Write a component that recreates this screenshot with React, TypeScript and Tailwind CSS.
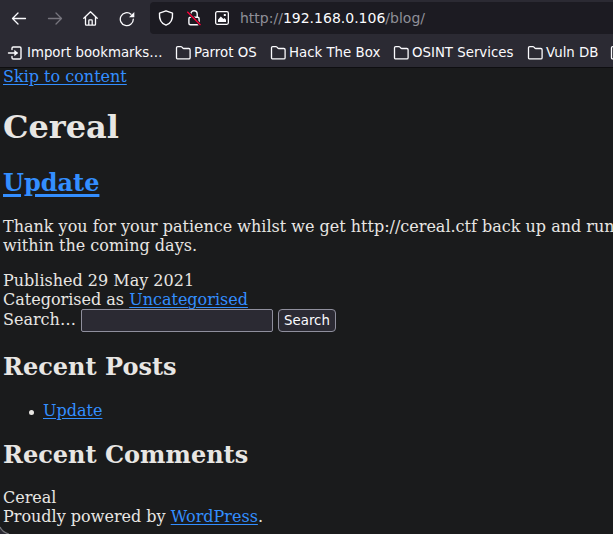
import React from "react";

const link = "text-[#338eff] underline decoration-1 underline-offset-2";
const headingLink = "text-[#338eff] underline decoration-[3px] underline-offset-3";

function Folder({ className = "" }: { className?: string }) {
  return (
    <svg className={`shrink-0 ${className}`} width="16" height="16" viewBox="0 0 16 16" fill="none" stroke="#fbfbfe" strokeWidth="1.3" strokeLinejoin="round">
      <path d="M2.700 1.600h3.200c.5 0 .8.2 1.100.5l.9 1c.2.3.5.4.9.4h5.100c.7 0 1.200.5 1.200 1.200v8c0 .7-.5 1.200-1.200 1.200H2.700c-.7 0-1.200-.5-1.200-1.200V2.800C1.500 2.100 2 1.600 2.700 1.600z" />
    </svg>
  );
}

function Bookmark({ label, className }: { label: string; className: string }) {
  return (
    <div className={`flex shrink-0 items-center gap-[3px] ${className}`}>
      <Folder />
      <span>{label}</span>
    </div>
  );
}

function Toolbar() {
  return (
    <div className="flex h-[34px] items-start">
      <div className="flex w-[150px] shrink-0 items-center gap-5 pt-[11px] pl-[11px]">
        <svg className="shrink-0" width="16" height="16" viewBox="0 0 16 16" fill="none" stroke="#fbfbfe" strokeWidth="1.3" strokeLinecap="round" strokeLinejoin="round">
          <path d="M14.500 7.500H1.500M7 2L1.500 7.500L7 13" />
        </svg>
        <svg className="shrink-0" width="16" height="16" viewBox="0 0 16 16" fill="none" stroke="#77757e" strokeWidth="1.3" strokeLinecap="round" strokeLinejoin="round">
          <path d="M1.500 7.500H14.500M9 2L14.500 7.500L9 13" />
        </svg>
        <svg className="shrink-0" width="16" height="16" viewBox="0 0 16 16" fill="none" stroke="#fbfbfe" strokeWidth="1.3" strokeLinecap="round" strokeLinejoin="round">
          <path d="M.8 7.200L7.500.7L14.200 7.200M2.500 6v7.300c0 .5.400.900.900.900h8.200c.5 0 .9-.4.9-.9V6M5.800 14V9.700c0-.5.300-.8.800-.8h1.800c.5 0 .8.300.8.800V14" />
        </svg>
        <svg className="shrink-0" width="16" height="16" viewBox="0 0 16 16" fill="none" stroke="#fbfbfe" strokeWidth="1.3" strokeLinecap="round">
          <path d="M14.300 8.200A6.500 6.500 0 1 1 12 3.200" />
          <path d="M15.300 1v5.300h-5.300z" fill="#fbfbfe" stroke="none" />
        </svg>
      </div>
      <div className="mt-[2px] flex h-8 flex-1 items-center rounded-l-[4px] bg-[#1c1b22] pl-[8px]">
        <svg className="shrink-0" width="16" height="16" viewBox="0 0 16 16" fill="none" stroke="#fbfbfe" strokeWidth="1.4" strokeLinejoin="round">
          <path d="M8 .8L14.500 3.200C14.900 8.500 12.700 13.500 8 15.200C3.300 13.500 1.100 8.500 1.500 3.200z" />
        </svg>
        <svg className="ml-[12px] shrink-0" width="16" height="16" viewBox="0 0 16 16" fill="none" stroke="#fbfbfe" strokeWidth="1.4">
          <rect x="2.900" y="7.200" width="10.200" height="7.500" rx="1.500" />
          <path d="M4.800 7V4a3.200 3.200 0 0 1 6.400 0v3" />
          <path d="M1.300 1.800L14.500 15" stroke="#1c1b22" strokeWidth="3" />
          <path d="M1.300 1.800L14.500 15" stroke="#ff0039" strokeWidth="1.300" />
        </svg>
        <svg className="ml-[12px] shrink-0" width="16" height="16" viewBox="0 0 16 16" fill="none" stroke="#fbfbfe" strokeWidth="1.300">
          <rect x="1.650" y="1.650" width="12.700" height="12.700" rx="1.500" />
          <path d="M4 12V9.800L6.800 6.500L9.500 9L10.500 8L12 9.800V12z" fill="#fbfbfe" stroke="none" />
          <rect x="9.800" y="4" width="2" height="2" fill="#fbfbfe" stroke="none" />
        </svg>
        <span className="ml-[10px] font-['DejaVu_Sans',sans-serif] text-[14px] whitespace-nowrap text-[#8f8f98]">
          http://<span className="text-[#fbfbfe]">192.168.0.106</span>/blog/
        </span>
      </div>
    </div>
  );
}

function BookmarksBar() {
  return (
    <div className="flex h-[34px] items-center overflow-hidden border-b border-[#0e0e11] pt-[5px] pl-[7px] font-['DejaVu_Sans',sans-serif] text-[13.33px] whitespace-nowrap text-[#fbfbfe]">
      <div className="flex w-[168px] shrink-0 items-center gap-[4px]">
        <svg className="shrink-0" width="16" height="16" viewBox="0 0 16 16" fill="none" stroke="#fbfbfe" strokeWidth="1.4" strokeLinecap="round" strokeLinejoin="round">
          <path d="M5 4.500V3.200c0-.7.500-1.200 1.200-1.200h6.600c.7 0 1.200.5 1.200 1.200v9.600c0 .7-.5 1.200-1.200 1.200H6.200C5.500 14 5 13.500 5 12.800V11.500M1.500 8H10" />
          <path d="M7.300 4.800L11 8L7.300 11.200z" fill="#fbfbfe" stroke="none" />
        </svg>
        <span>Import bookmarks…</span>
      </div>
      <Bookmark label="Parrot OS" className="w-[94px]" />
      <Bookmark label="Hack The Box" className="ml-px w-[122px]" />
      <Bookmark label="OSINT Services" className="ml-px w-[134px]" />
      <Bookmark label="Vuln DB" className="w-[83px]" />
      <Folder />
    </div>
  );
}

export default function App() {
  return (
    <div className="relative h-[534px] w-[613px] overflow-hidden bg-[#1a1b1c] text-[#e8e6e3]">
      <div className="bg-[#2b2a33]">
        <Toolbar />
        <BookmarksBar />
      </div>
      <main className="-mt-px pl-[3px] font-['DejaVu_Serif',serif] text-[16px] leading-[19px] whitespace-nowrap">
        <a className={link}>Skip to content</a>
        <h1 className="mt-[23px] text-[32px] leading-[37px] font-bold">Cereal</h1>
        <h2 className="mt-[23px] text-[24px] leading-[28px] font-bold"><a className="text-[#338eff] underline decoration-[3px] underline-offset-[3px]">Update</a></h2>
        <p className="mt-5">
          Thank you for your patience whilst we get http://cereal.ctf back up and running.
          <br />
          within the coming days.
        </p>
        <div className="mt-4">Published 29 May 2021</div>
        <div>Categorised as <a className={link}>Uncategorised</a></div>
        <div className="flex h-[23px] items-center">
          <label className="w-[78px] pb-[2px]">Search…</label>
          <input className="h-[23px] w-[192px] rounded-[2px] border border-[#8f8f9d] bg-[#2b2a33]" />
          <button className="ml-[5px] h-[23px] w-[58px] rounded-[4px] border border-[#8f8f9d] bg-[#2b2a33] font-['DejaVu_Sans',sans-serif] text-[13.33px] leading-[20px] text-[#fbfbfe]">Search</button>
        </div>
        <h2 className="mt-[21px] text-[24px] leading-[28px] font-bold">Recent Posts</h2>
        <ul className="mt-5 pl-[26px]">
          <li className="flex items-center gap-[9px]">
            <span className="mt-[3px] size-[5px] rounded-full bg-[#e8e6e3]" />
            <a className={link}>Update</a>
          </li>
        </ul>
        <h2 className="mt-[21px] text-[24px] leading-[28px] font-bold">Recent Comments</h2>
        <div className="mt-[19px]">Cereal</div>
        <div>Proudly powered by <a className={link}>WordPress</a>.</div>
      </main>
      <svg className="absolute bottom-0 left-0" width="10" height="8" viewBox="0 0 10 8" fill="none">
        <path d="M0 1Q2 6 9 8H0z" fill="#2b2a33" />
        <path d="M0 1Q2 6 9 8" stroke="#77777b" strokeWidth="1.300" />
      </svg>
    </div>
  );
}
